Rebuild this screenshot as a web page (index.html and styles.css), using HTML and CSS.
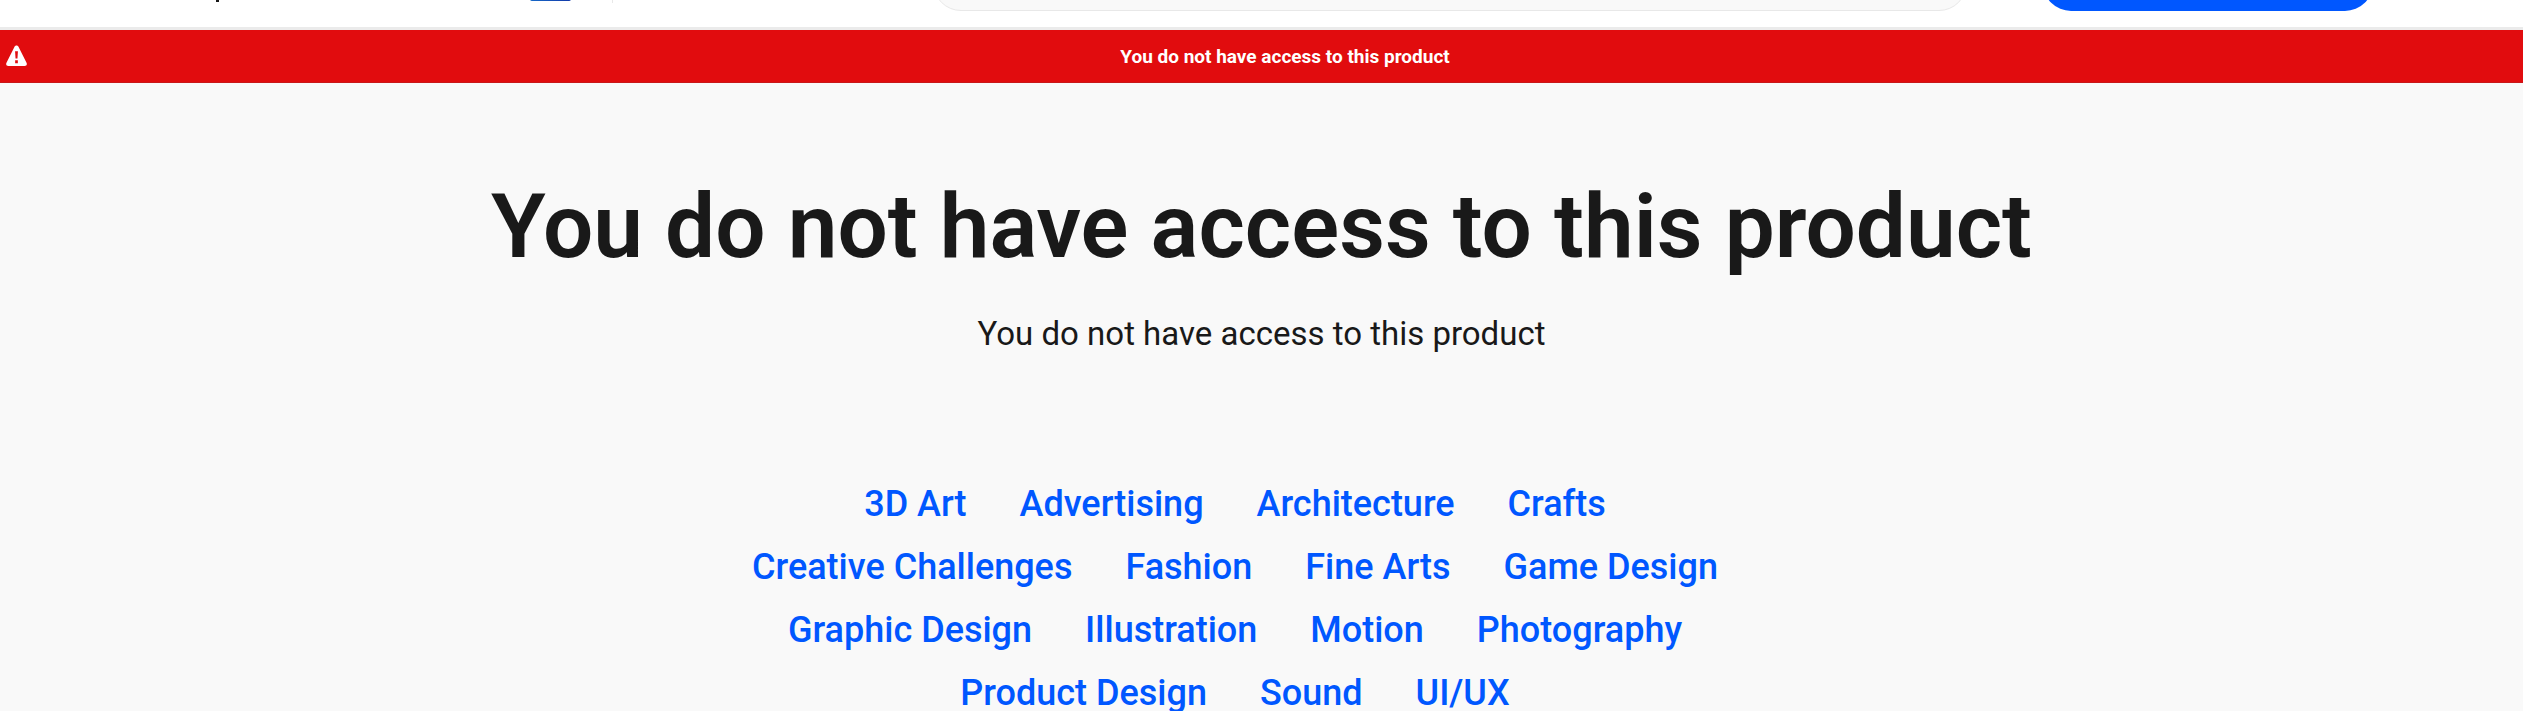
FILE: index.html
```html
<!DOCTYPE html>
<html lang="en">
<head>
<meta charset="UTF-8">
<meta name="viewport" content="width=device-width, initial-scale=1.0">
<title>You do not have access to this product</title>

<link rel="stylesheet" href="styles.css">
</head>

<body>

<header class="topbar">
    <span class="nav-mark"></span>
    <span class="nav-badge"></span>
    <span class="nav-divider"></span>
    <input class="search" type="search" aria-label="Search">
    <button class="action" type="button" aria-label="Sign up"></button>
</header>

<div class="alert" role="alert">
    <svg class="alert-icon" viewBox="0 0 22 22" aria-hidden="true">
        <path fill="#fff" fill-rule="evenodd" d="M11 0C12 0 12.7.6 13.2 1.5L21.5 18C22.4 19.9 21.5 21.5 19.5 21.5H2.5C.5 21.5-.4 19.9.5 18L8.8 1.5C9.3.6 10 0 11 0ZM9.5 6L10 13.5H12L12.5 6ZM9.6 15.5V18.5H12.4V15.5Z"/>
    </svg>
    <p class="alert-text">You do not have access to this product</p>
</div>

<main class="error">
    <h1>You do not have access to this product</h1>
    <p class="message">You do not have access to this product</p>

    <ul class="fields">
        <li><a href="#">3D Art</a></li>
        <li><a href="#">Advertising</a></li>
        <li><a href="#">Architecture</a></li>
        <li><a href="#">Crafts</a></li>
        <li><a href="#">Creative Challenges</a></li>
        <li><a href="#">Fashion</a></li>
        <li><a href="#">Fine Arts</a></li>
        <li><a href="#">Game Design</a></li>
        <li><a href="#">Graphic Design</a></li>
        <li><a href="#">Illustration</a></li>
        <li><a href="#">Motion</a></li>
        <li><a href="#">Photography</a></li>
        <li><a href="#">Product Design</a></li>
        <li><a href="#">Sound</a></li>
        <li><a href="#">UI/UX</a></li>
    </ul>
</main>

</body>
</html>
```
FILE: styles.css
```css
* {
    box-sizing: border-box;
}

body {
    margin: 0;
    background: #f9f9f9;
    color: #191919;
    font-family: Roboto, "Liberation Sans", sans-serif;
}

.topbar {
    display: flex;
    align-items: flex-end;
    height: 30px;
    padding: 0 150px 16px 216px;
    background: white;
    border-bottom: 3px solid #ebebeb;
    overflow: hidden;
}

.nav-mark {
    width: 3px;
    height: 14px;
    margin-bottom: 9px;
    background: #191919;
}

.nav-badge {
    width: 41px;
    height: 14px;
    margin: 0 41px 10px 311px;
    background: linear-gradient(90deg, #1769c8, #1239a8);
    border-radius: 2px;
}

.nav-divider {
    width: 1px;
    height: 14px;
    margin-bottom: 8px;
    background: #e8e8e8;
}

.search {
    flex: 1;
    min-width: 0;
    height: 56px;
    margin: 0 76px 0 320px;
    padding: 0 56px;
    background: #f9f9f9;
    border: 1px solid #e8e8e8;
    border-radius: 28px;
}

.action {
    width: 330px;
    height: 56px;
    background: #0057ff;
    border: none;
    border-radius: 28px;
    cursor: pointer;
}

.nav-mark,
.nav-badge,
.nav-divider,
.action {
    flex-shrink: 0;
}

.alert {
    display: flex;
    align-items: center;
    height: 53px;
    padding-left: 6px;
    background: #e10c0e;
    border-bottom: 1px solid #c8181a;
    color: white;
}

.alert-icon {
    width: 21px;
    height: 22px;
    margin-right: 20px;
}

.alert-text {
    flex: 1;
    margin: 0;
    padding-top: 2px;
    font-size: 19px;
    font-weight: 700;
    line-height: 24px;
    text-align: center;
}

.error {
    padding-top: 92px;
    text-align: center;
}

h1 {
    margin: 0;
    font-size: 89px;
    font-weight: 600;
    line-height: 104px;
}

.message {
    margin: 35px 0 0;
    font-size: 33px;
    line-height: 40px;
}

.fields {
    display: flex;
    flex-wrap: wrap;
    justify-content: center;
    max-width: 1072px;
    margin: 119px auto 0;
    padding: 0;
    list-style: none;
}

.fields li {
    margin-right: 53px;
    font-size: 36px;
    font-weight: 500;
    line-height: 63px;
}

.fields a {
    color: #0057ff;
    text-decoration: none;
}

.fields a:hover {
    text-decoration: underline;
}
```
